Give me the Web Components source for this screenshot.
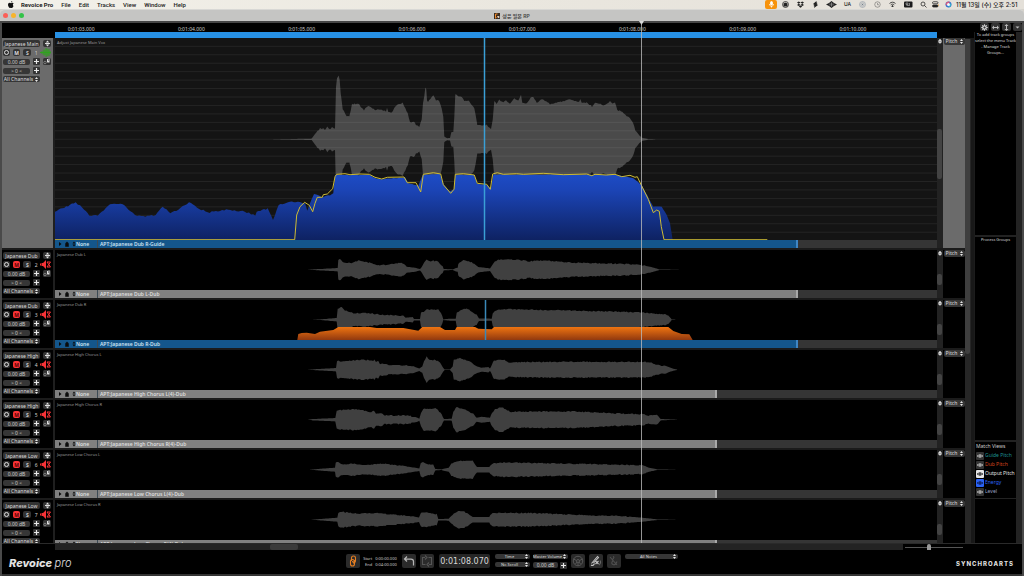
<!DOCTYPE html>
<html lang="en">
<head>
<meta charset="utf-8">
<title>Revoice Pro</title>
<style>
html, body { margin: 0; height: 100%; }
body { background: #d5d2cb; font-family: "Noto Sans", "Noto Sans CJK KR", sans-serif; font-size: 5px; line-height: 6px; color: #ccc; overflow: hidden; }
</style>
</head>
<body>
<rp-app></rp-app>
<script>
const BASE = `
  * { box-sizing: border-box; }
  button, select, input { font: inherit; color: inherit; margin: 0; padding: 0; border: 0; background: none; min-width: 0; appearance: none; border-radius: 0; outline-offset: 1px; }
  button { display: flex; align-items: center; justify-content: center; white-space: nowrap; }
  svg { display: block; }
`;
function define(name, render, after) {
  customElements.define(name, class extends HTMLElement {
    connectedCallback() {
      if (this.shadowRoot) return;
      const root = this.attachShadow({ mode: 'open' });
      const t = document.createElement('template');
      t.innerHTML = `<style>${BASE}</style>` + render(this);
      root.append(t.content.cloneNode(true));
      if (after) after(this, root);
    }
  });
}

/* ---------- drop-down ---------- */
define('rp-select', el => `
<style>
  :host { display: grid; height: 7px; background: #363636; border-radius: 2px; font-size: 5px; line-height: 7px; font-weight: 500; }
  select, svg { grid-area: 1 / 1; }
  select { width: 100%; height: 100%; text-align: center; text-align-last: center; padding-right: 6px; }
  svg { justify-self: end; align-self: center; margin-right: 2px; width: 3px; height: 5px; pointer-events: none; }
</style>
<select aria-label="${el.getAttribute('label')}"><option>${el.getAttribute('value')}</option></select>
<svg viewBox="0 0 6 10"><path d="M0 4L3 0L6 4zM0 6L3 10L6 6z" fill="#e6e6e6"/></svg>`);

/* ---------- system menu bar ---------- */
define('rp-menubar', () => `
<style>
  :host { display: flex; align-items: center; height: 9px; background: linear-gradient(90deg, #f3f1ea, #eae7df 50%, #e4e0d9); color: #1c1c1c; font: 500 6px/9px Inter, "Noto Sans CJK KR", sans-serif; padding: 0 7px 0 8px; }
  nav { display: flex; gap: 8px; margin-left: 7px; font-family: Roboto, sans-serif; }
  nav button:first-child { font-weight: 700; }
  .right { display: flex; align-items: center; margin-left: auto; height: 9px; }
  .right i { width: 15px; display: flex; justify-content: center; font-style: normal; font-size: 5px; }
  .right i svg { width: 7px; height: 7px; }
  .right .mic { width: 12px; height: 9px; background: #f7930c; border-radius: 2px; align-items: center; margin-right: 1px; }
  .w17 { width: 17px !important; } .w12 { width: 12px !important; }
  .w17 svg { width: 11px !important; }
  time { width: 61px; text-align: right; white-space: nowrap; }
</style>
<svg width="6" height="7" viewBox="0 0 24 28"><path fill="#111" d="M17 0c.3 3-2 6-5 6-.3-3 2-5.600 5-6zM22 20c-1.500 4-4 7.500-6 7.500s-2.500-1-4.500-1-3 1-4.500 1C4 27.500 0 20.500 0 15c0-5 3-8 6.500-8C9 7 10.500 8.500 12 8.500S15 7 18 7c1.500 0 3.500.8 4.700 2.500-4.500 2.500-3.700 8.500-.7 10.500z"/></svg>
<nav aria-label="Application menu"><button>Revoice Pro</button><button>File</button><button>Edit</button><button>Tracks</button><button>View</button><button>Window</button><button>Help</button></nav>
<div class="right">
  <i class="mic"><svg viewBox="0 0 14 14" stroke="#fff" fill="none" stroke-width="1.500"><rect x="5" y="1" width="4" height="7" rx="2" fill="#fff"/><path d="M3 6c0 6 8 6 8 0M7 10v3"/></svg></i>
  <i><svg viewBox="0 0 14 14"><circle cx="7" cy="7" r="6" fill="none" stroke="#222" stroke-width="1.500"/><path d="M3 5l4-2 4 2v6H3z" fill="#222"/></svg></i>
  <i><svg viewBox="0 0 14 14" fill="#222"><path d="M3.500 1L7 3.200 3.500 5.500 0 3.200zM10.500 1L14 3.200l-3.500 2.300L7 3.200zM3.500 5.500L7 7.800l-3.500 2.300L0 7.800zM10.500 5.500L14 7.800l-3.500 2.300L7 7.800zM7 9l3.500 2.200L7 13.500l-3.500-2.300z"/></svg></i>
  <i><svg viewBox="0 0 14 14" fill="#222"><path d="M9 0L2 6l3 2-2 2 2 1-1 3 8-6-3-2 2-2-2-1z"/></svg></i>
  <i class="w17"><svg viewBox="0 0 22 14"><path d="M0 7l4-2 2-1 5-4 5 4 2 1 4 2-4 2-2 1-5 4-5-4-2-1z" fill="#222"/><path d="M8 5v4M11 3v8M14 5v4" stroke="#ddd"/></svg></i>
  <i>UA</i>
  <i><svg viewBox="0 0 14 14" fill="none" stroke="#7d8a98"><circle cx="7" cy="7" r="6"/><circle cx="7" cy="7" r="3.500"/><circle cx="7" cy="7" r="1" fill="#456"/></svg></i>
  <i><svg viewBox="0 0 14 14" fill="none" stroke="#555"><circle cx="7" cy="7" r="5.500"/><path d="M7 4v3.500h3"/></svg></i>
  <i><svg viewBox="0 0 14 14" fill="none" stroke="#222" stroke-width="1.600"><path d="M1 5c4-3.500 8-3.500 12 0M3.500 7.800c2.500-2 4.500-2 7 0"/><path d="M5.500 10l1.500-1 1.500 1L7 12z" fill="#222"/></svg></i>
  <i class="w17"><svg viewBox="0 0 20 14"><rect x="1" y="1" width="17" height="12" rx="2" fill="#1c1c1c"/><path d="M5 4h4v3H5zM12 4v6M6 9h5" stroke="#ddd" fill="none"/></svg></i>
  <i class="w12"><svg viewBox="0 0 14 14" fill="none" stroke="#222" stroke-width="1.500"><circle cx="6" cy="6" r="4"/><path d="M9 9l4 4"/></svg></i>
  <i class="w12"><svg viewBox="0 0 14 14" fill="none" stroke="#222" stroke-width="1.500"><rect x="1" y="1.500" width="11" height="4" rx="2"/><rect x="1" y="8" width="11" height="4" rx="2" fill="#222"/><circle cx="13" cy="8" r="1" fill="#f7930c" stroke="none"/></svg></i>
  <i><svg viewBox="0 0 14 14"><circle cx="7" cy="7" r="6" fill="#3a6fd0"/><path d="M1.500 8a6 6 0 0 1 8-6.500L7 7z" fill="#d95a7c"/><path d="M12 5a6 6 0 0 1-5 8l0-6z" fill="#33b6c8"/><circle cx="7" cy="7" r="3" fill="#f3f6fb"/></svg></i>
  <time>11월 13일 (수) 오후 2:51</time>
</div>`);

/* ---------- window title bar ---------- */
define('rp-titlebar', () => `
<style>
  :host { display: grid; grid-template-columns: 1fr auto 1fr; align-items: center; height: 14px; padding: 0 3px 0; background: #c5c5c3; border-radius: 5px 5px 0 0; border-top: 1px solid #d8d8d5; border-bottom: 2px solid #454545; color: #444; font: 600 5px/8px Inter, "Noto Sans CJK KR", sans-serif; }
  .lights { display: flex; gap: 3px; }
  .lights button { width: 5px; height: 5px; border-radius: 50%; }
  h1 { display: flex; align-items: center; gap: 2px; font: inherit; margin: 0; }
</style>
<div class="lights"><button aria-label="Close" style="background:#fb5f57"></button><button aria-label="Minimize" style="background:#f8b42d"></button><button aria-label="Zoom" style="background:#33c348"></button></div>
<h1><svg width="6" height="6" viewBox="0 0 12 12"><rect width="12" height="12" fill="#3b2e22"/><path d="M3 11V2h4M5 9l3-3" stroke="#f08a2c" stroke-width="2" fill="none"/><circle cx="9" cy="8" r="2" fill="#ddd"/></svg>성운 일본 RP</h1>`);

/* ---------- ruler ---------- */
define('rp-ruler', () => `
<style>
  :host { display: block; margin: 0 37px 0 53px; }
  .codes { display: flex; height: 9px; overflow: hidden; font-size: 5px; line-height: 12px; }
  .codes span { flex: 0 0 12.500%; text-align: center; }
  .codes div { display: flex; flex: 0 0 100%; margin: 0 -29px; }
  .range { height: 6px; background: #2790e4; }
</style>
<div class="codes"><div>${[3,4,5,6,7,8,9,10].map(n => `<span>0:01:${String(n).padStart(2, '0')}.000</span>`).join('')}</div></div>
<div class="range"></div>`);

/* ---------- waveform drawings ---------- */
/* Envelope points are [x, amplitude] pairs in thirds of a pixel; x counts from ORIGIN. */
const ORIGIN = 235;
const WAVES = {
  1: '-50 0 0 1 65 2 75 16 90 33 95 30 100 34 105 28 112 38 120 30 126 37 132 31 135 33 138 158 141 183 146 193 149 178 152 138 158 90 170 70 178 68 186 106 208 105 212 98 222 88 235 101 255 88 270 90 288 84 291 94 295 82 305 81 320 103 338 110 346 93 353 78 360 50 371 54 378 43 388 38 395 58 399 108 403 128 406 156 409 150 411 118 414 113 425 126 430 133 438 118 447 116 455 93 460 68 463 8 472 3 480 4 484 22 490 23 493 68 496 136 504 128 515 128 523 116 535 116 545 103 553 93 557 73 562 43 575 41 590 43 603 31 608 58 613 115 620 106 628 118 640 110 648 118 660 106 673 123 685 116 693 132 697 110 710 108 722 125 730 126 740 110 757 121 780 106 800 109 838 120 868 112 871 122 875 110 890 110 906 98 916 111 940 102 955 108 960 116 967 108 975 110 982 88 997 83 1010 70 1020 63 1030 48 1036 28 1045 16 1055 5 1075 1 1100 0',
  2: '55 0 68 1 90 2 143 5 145 30 152 32 158 24 165 20 185 20 205 28 235 22 265 14 290 14 330 21 345 16 350 9 375 6 390 2 397 10 402 22 410 30 418 25 430 27 445 24 458 10 461 2 488 1 498 5 503 6 505 18 520 30 545 22 565 8 600 4 606 12 615 24 625 30 680 30 720 25 760 28 830 22 900 20 1040 16 1080 9 1108 1 1170 0',
  3: '70 0 90 1 140 5 143 32 155 39 165 28 190 19 235 20 270 15 340 12 347 6 368 8 372 2 390 2 393 20 410 30 445 30 453 20 457 10 460 1 480 3 497 3 500 20 510 28 530 34 560 15 567 4 605 3 608 18 618 28 635 32 820 28 1050 22 1100 18 1135 14 1145 1 1160 0',
  4: '55 0 68 1 138 5 141 26 160 25 210 30 245 28 250 26 253 31 258 24 265 27 270 18 300 14 365 12 375 8 388 4 397 10 402 24 410 40 418 30 440 28 450 20 460 5 464 1 480 1 488 10 491 30 510 34 540 25 560 10 575 6 595 8 600 4 606 15 612 28 640 30 655 22 780 24 1070 23 1085 20 1110 13 1130 10 1150 3 1165 0',
  5: '55 0 68 2 136 5 140 28 190 31 215 30 240 22 252 26 258 18 270 20 285 13 350 13 380 7 388 3 393 20 400 32 440 34 455 15 462 2 485 3 490 25 500 38 530 28 550 18 560 6 575 9 600 6 606 20 615 32 635 38 660 24 850 25 1000 18 1060 16 1075 12 1100 16 1112 2 1165 0',
  6: '60 0 70 1 135 6 137 20 143 24 150 20 160 15 185 18 225 14 275 18 337 12 380 5 388 4 392 18 399 22 415 16 430 14 436 2 455 1 461 3 476 6 484 18 505 27 548 27 561 8 598 8 608 18 630 22 729 20 897 17 1058 13 1077 6 1102 1 1160 0',
  7: '65 0 76 1 142 6 145 20 150 24 200 18 262 20 350 12 387 7 393 20 405 22 440 16 445 2 476 3 484 12 495 20 505 25 523 24 548 8 598 8 604 18 630 20 735 20 884 13 996 11 1058 6 1102 1 1160 0'
};
const ENERGY = '-705 455 -683 445 -643 427 -623 443 -602 467 -577 467 -565 455 -540 433 -502 433 -484 450 -465 465 -434 470 -403 465 -382 440 -359 460 -341 453 -303 427 -279 443 -247 457 -185 449 -136 455 -104 467 -100 455 -67 445 -51 480 -34 435 0 425 35 428 45 430 52 452 60 430 72 402 85 406 95 412 115 406 130 400 135 345 240 345 255 354 270 358 345 352 355 370 378 375 385 378 398 345 450 342 462 375 480 394 492 387 496 345 552 345 562 372 590 375 603 385 610 344 980 345 1010 350 1030 355 1055 375 1090 440 1115 440 1130 465 1140 490 1148 540';
const CONTOUR = '-705 539 14 539 20 465 30 440 44 427 58 436 68 455 75 430 82 412 97 412 100 404 112 402 128 386 135 350 140 343 165 341 180 344 210 342 238 343 255 352 275 357 292 352 342 351 352 368 378 368 392 396 400 343 430 338 452 342 460 374 482 400 492 388 496 343 520 341 553 345 562 370 590 373 601 388 608 342 622 338 640 343 680 341 700 343 760 340 820 344 890 342 905 347 915 343 950 345 975 343 995 350 1020 346 1035 352 1042 350 1055 378 1075 418 1090 458 1100 450 1108 454 1114 500 1122 539 1432 539';
const DUB_ENERGY = '22 120 25 102 35 99 50 98 75 102 90 95 130 90 145 81 240 81 260 84 340 84 385 92 397 81 450 81 465 90 495 90 500 81 555 81 565 86 605 88 612 81 1135 81 1150 93 1175 102 1198 103 1208 120';

const pairs = s => { const n = s.split(' ').map(Number), out = []; for (let i = 0; i < n.length; i += 2) out.push([n[i], n[i + 1]]); return out; };
const line = (s, oy) => pairs(s).map(([x, y]) => `${(ORIGIN + x / 3).toFixed(1)} ${(oy + y / 3).toFixed(1)}`).join('L');
/* Adds fine ripples along an energy outline. */
function rippled(s, oy) {
  const p = pairs(s), out = [];
  let seed = 5;
  for (let i = 1; i < p.length; i++) {
    const [x0, y0] = p[i - 1], [x1, y1] = p[i], steps = Math.max(1, Math.round((x1 - x0) / 6));
    for (let k = 0; k < steps; k++) {
      seed = (seed * 16807 + 11) % 2147483647;
      const j = k ? (seed / 2147483647 - .5) * (x0 < 130 ? 1.6 : .6) : 0;
      out.push(`${(ORIGIN + (x0 + (x1 - x0) * k / steps) / 3).toFixed(1)} ${(oy + (y0 + (y1 - y0) * k / steps) / 3 + j).toFixed(1)}`);
    }
  }
  const e = p[p.length - 1];
  out.push(`${(ORIGIN + e[0] / 3).toFixed(1)} ${(oy + e[1] / 3).toFixed(1)}`);
  return out.join('L');
}
function wavePath(key, cy) {
  const p = pairs(WAVES[key]), up = [], down = [];
  let seed = 17 * key;
  for (let i = 1; i < p.length; i++) {
    const [x0, a0] = p[i - 1], [x1, a1] = p[i], steps = Math.max(1, Math.round((x1 - x0) / 4));
    for (let k = 0; k < steps; k++) {
      seed = (seed * 16807 + 11) % 2147483647;
      const a = (a0 + (a1 - a0) * k / steps) / 3, j = a > 3 ? (seed / 2147483647 - .5) * 1.1 : 0;
      const x = (ORIGIN + (x0 + (x1 - x0) * k / steps) / 3).toFixed(1), h = Math.max(a + j, .1);
      up.push(`${x} ${(cy - h).toFixed(1)}`); down.push(`${x} ${(cy + h).toFixed(1)}`);
    }
  }
  return 'M' + up.join('L') + 'L' + down.reverse().join('L') + 'z';
}
define('rp-waveform', el => {
  const n = +el.getAttribute('track'), main = n === 1, h = main ? 202 : 40, cy = main ? 101.3 : 19.7;
  let s = `<path d="${wavePath(n, cy)}" fill="${main ? '#4a4a4a' : '#404040'}"/>`;
  if (main) {
    let g = '';
    for (let y = 8.3; y < h; y += 8.450) g += `M0 ${y.toFixed(2)}H882`;
    s += `<path d="${g}" stroke="#fff" stroke-opacity=".07"/>
    <linearGradient id="e" x1="0" y1="136" x2="0" y2="202" gradientUnits="userSpaceOnUse"><stop offset="0" stop-color="#1d4cc6"/><stop offset=".25" stop-color="#1b44b5"/><stop offset="1" stop-color="#0e2262"/></linearGradient>
    <path d="M0 202L${rippled(ENERGY, 22)}z" fill="url(#e)"/>
    <path d="M${line(CONTOUR, 22)}" fill="none" stroke="#cdbb35" stroke-width="1"/>
    <path d="M429.500 0V202" stroke="#3a9fd6" stroke-width="1.500"/>`;
  }
  if (n === 3) s += `
    <linearGradient id="o" x1="0" y1="27" x2="0" y2="40" gradientUnits="userSpaceOnUse"><stop stop-color="#ef7411"/><stop offset="1" stop-color="#91390f"/></linearGradient>
    <path d="M${line(DUB_ENERGY, 0)}z" fill="url(#o)"/><path d="M430.500 0V40" stroke="#3a88b8" stroke-width="1.500"/>`;
  return `<style>:host { display: block; } svg { width: 100%; height: 100%; }</style>
  <svg viewBox="0 0 882 ${h}" preserveAspectRatio="none" aria-hidden="true">${s}</svg>`;
});

/* ---------- track controls ---------- */
define('rp-track-header', el => {
  const n = el.getAttribute('number'), muted = n !== '1';
  const mag = `<svg width="7" height="7" viewBox="0 0 14 14"><rect width="14" height="14" rx="2" fill="#333"/><path d="M7 2v10M2 7h10" stroke="#e8e8e8" stroke-width="2.400"/></svg>`;
  return `
<style>
  :host { display: flex; flex-direction: column; gap: 2px; padding: 2px 2px 0 1px; background: ${muted ? '#000' : '#6b6b6b'}; overflow: hidden; }
  .row { display: flex; align-items: center; gap: 3px; height: 7px; }
  .name { width: 37px; height: 7px; background: #333; color: #ddd; border-radius: 2px; font-size: 5px; }
  .icon { width: 7px; height: 7px; background: #333; border-radius: 2px; }
  .mute { background: ${muted ? '#f93237' : '#333'}; color: ${muted ? '#5a0505' : '#ddd'}; }
  .icon.b { font-weight: 700; width: 8px; }
  .num { width: 4px; text-align: center; font-size: 5px; }
  .row .num + svg { margin-left: -1px; flex: none; }
  input { width: 27px; height: 6px; background: #363636; border-radius: 2px; text-align: center; font-size: 5px; }
  svg { flex: none; }
  rp-select { width: 37px; height: 6px; line-height: 6px; }
</style>
<div class="row"><button class="name">${el.getAttribute('name')}</button><button class="icon b" aria-label="Collapse track"><svg width="7" height="7" viewBox="0 0 14 14"><path d="M2 7h10" stroke="#ddd" stroke-width="2"/><path d="M3.500 5L7 1l3.500 4zM3.500 9L7 13l3.500-4z" fill="#ddd"/></svg></button></div>
<div class="row"><button class="icon" aria-label="Record"><svg width="7" height="7" viewBox="0 0 14 14"><circle cx="7" cy="7" r="4" fill="none" stroke="#ddd" stroke-width="2"/></svg></button><button class="icon b mute" aria-pressed="${muted}">M</button><button class="icon b">S</button><span class="num">${n}</span>
<svg width="11" height="9" viewBox="0 0 22 18">${muted
  ? '<path d="M0 7h2v4H0zM3 6h3v6H3zM6 6l6-6v18l-6-6z" fill="#f93237"/><path d="M14 4l7 10M21 4l-7 10M14 4h7M14 14h7" stroke="#f93237" stroke-width="2"/>'
  : '<path d="M0 9h22M3 7v4M6 5v8M8 3v12M10 4v10M12 0v18M14 1v16M16 3v12M18 2v14M20 6v6" stroke="#2ca51c" stroke-width="1.800"/>'}</svg></div>
<div class="row"><input aria-label="Track level" value="0.00 dB">${mag}<svg width="8" height="7" viewBox="0 0 16 14"><rect width="16" height="14" rx="3" fill="#333"/><circle cx="4" cy="9" r="2.500" fill="none" stroke="#bbb"/><path d="M8 8V2h2v4h1V1h2v8H9z" fill="#ddd"/></svg></div>
<div class="row"><input aria-label="Track pan" value="&gt; 0 &lt;">${mag}</div>
<rp-select label="Channels" value="All Channels"></rp-select>`;
});

/* ---------- track ---------- */
define('rp-track', el => {
  const n = el.getAttribute('number'), main = n === '1';
  const sel = el.hasAttribute('selected');
  return `
<style>
  :host { display: grid; grid-template-columns: 51px 2px minmax(0, 1fr) 6px 22px; flex: none; height: ${main ? 212 : 50}px; border-bottom: 2px solid #1b1b1b; background: #000; }
  .divider { background: #1f1f1f; }
  .lane { display: grid; grid-template-rows: 1fr 8px; min-width: 0; min-height: 0; background: ${main ? '#141414' : '#000'}; }
  rp-waveform, .title { grid-area: 1 / 1; min-height: 0; min-width: 0; }
  .title { margin: 2px; font-size: 4px; line-height: 5px; color: #9a9a9a; }
  .foot { background: #353535; }
  .clip { display: flex; align-items: center; height: 8px; width: ${el.getAttribute('end')}; background: ${sel ? '#14568b' : '#808080'}; color: ${sel ? '#cfe3f2' : '#dedede'}; border-right: 2px solid ${sel ? '#3f86c4' : '#a8a8a8'}; font-weight: 600; font-size: 5px; line-height: 8px; white-space: nowrap; }
  .clip svg { margin-left: 3px; flex: none; }
  .none { width: 22px; border-right: 1px solid #3c4a55; }
  .label { padding-left: 2px; }
  .scroll { background: #222; }
  .scroll svg { margin: 1px 1px 0; }
  .thumb { width: 5px; margin-top: ${main ? 85 : 18}px; height: ${main ? 50 : 11}px; border-radius: 2px; background: #434343; }
  .pitch { padding-left: 1px; background: ${main ? '#6b6b6b' : '#000'}; }
</style>
<rp-track-header name="${el.getAttribute('name')}" number="${n}"></rp-track-header>
<div class="divider"></div>
<div class="lane"><rp-waveform track="${n}"></rp-waveform><div class="title">${el.getAttribute('caption')}</div>
<div class="foot"><div class="clip">
<svg width="4" height="6" viewBox="0 0 8 12"><path d="M2 2v8l5-4z" fill="#0a0a0a"/></svg>
<svg width="4" height="6" viewBox="0 0 8 12"><path d="M1 5h6v6H1zM2.500 5V2.500h3V5" fill="#0a0a0a" stroke="#0a0a0a"/></svg>
<svg width="4" height="6" viewBox="0 0 8 12"><path d="M1 5l3-4 3 4zM1 7l3 4 3-4z" fill="#0a0a0a"/></svg>
<span class="none">None</span><span class="label">${el.getAttribute('clip')}</span></div></div></div>
<div class="scroll"><svg width="4" height="5" viewBox="0 0 8 10"><path d="M0 5h8M1 4l3-4 3 4zM1 6l3 3 3-3z" fill="#ddd" stroke="#ddd"/></svg><div class="thumb"></div></div>
<div class="pitch"><rp-select label="Track view" value="Pitch"></rp-select></div>`;
});

/* ---------- timeline ---------- */
const TRACKS = [
  ['Japanese Main', 'Adjust Japanese Main Vox', 'APT:Japanese Dub R-Guide', '84.200%', 1],
  ['Japanese Dub', 'Japanese Dub L', 'APT:Japanese Dub L-Dub', '84.200%', 0],
  ['Japanese Dub', 'Japanese Dub R', 'APT:Japanese Dub R-Dub', '84.200%', 1],
  ['Japanese High', 'Japanese High Chorus L', 'APT:Japanese High Chorus L(4)-Dub', '75.100%', 0],
  ['Japanese High', 'Japanese High Chorus R', 'APT:Japanese High Chorus R(4)-Dub', '75.100%', 0],
  ['Japanese Low', 'Japanese Low Chorus L', 'APT:Japanese Low Chorus L(4)-Dub', '75.100%', 0],
  ['Japanese Low', 'Japanese Low Chorus R', 'APT:Japanese Low Chorus R(4)-Dub', '75.100%', 0]
];
define('rp-timeline', () => `
<style>
  :host { display: flex; flex-direction: column; min-width: 0; min-height: 0; position: relative; background: #000; }
  .body { flex: 1; min-height: 0; display: grid; grid-template-columns: minmax(0, 1fr) 9px; }
  .tracks { display: flex; flex-direction: column; overflow: hidden; min-height: 0; }
  .vscroll { background: #262626; border-right: 3px solid #181818; border-top: 1px solid #181818; }
  .vscroll div { height: 62.500%; width: 5px; background: #3e3e3e; border-radius: 0 0 3px 3px; }
  .playhead { position: absolute; top: 0; bottom: 0; left: calc(53px + (100% - 90px) * .6645); width: 1px; background: #b9b9b9; opacity: .8; }
  .playhead svg { margin: -2px 0 0 -2px; }
</style>
<rp-ruler></rp-ruler>
<div class="body"><div class="tracks">
${TRACKS.map((t, i) => `<rp-track number="${i + 1}" name="${t[0]}" caption="${t[1]}" clip="${t[2]}" end="${t[3]}"${t[4] ? ' selected' : ''}></rp-track>`).join('')}
</div><div class="vscroll"><div></div></div></div>
<div class="playhead"><svg width="5" height="4" viewBox="0 0 10 8"><path d="M0 0h10L5 8z" fill="#fff"/></svg></div>`);

/* ---------- side panel ---------- */
const EYE = (c, bg) => `<svg width="8" height="8" viewBox="0 0 16 16"><rect width="16" height="16" rx="2" fill="${bg}"/><path d="M2 8q6-6 12 0q-6 6-12 0z" fill="none" stroke="${c}" stroke-width="1.600"/><circle cx="8" cy="8" r="2" fill="${c}"/></svg>`;
define('rp-sidebar', () => `
<style>
  :host { display: flex; flex-direction: column; min-height: 0; background: #000; }
  .tools { display: flex; gap: 2px; height: 9px; justify-content: flex-end; }
  .tools button { width: 9px; height: 8px; background: #333; border-radius: 2px; }
  .cols { flex: 1; min-height: 0; display: grid; grid-template-columns: minmax(0, 1fr) 6px; }
  .panels { display: flex; flex-direction: column; min-height: 0; border-left: 1px solid #1c1c1c; }
  section { border-bottom: 2px solid #222; text-align: center; }
  section p, h2 { margin: 0; font: inherit; }
  .grow { flex: 1 1 0; min-height: 0; font-size: 4px; white-space: nowrap; color: #ddd; }
  .views { height: 57px; text-align: left; border-bottom: 1px solid #222; padding: 1px; line-height: 7px; display: flex; flex-direction: column; gap: 2px; }
  label { display: flex; align-items: center; gap: 1px; height: 7px; white-space: nowrap; }
  label input { position: absolute; width: 8px; height: 7px; opacity: 0; }
  .rest { height: 44px; }
  .bar { background: #232323; }
</style>
<div class="tools">
<button aria-label="Settings"><svg width="7" height="7" viewBox="0 0 14 14"><circle cx="7" cy="7" r="3.500" fill="none" stroke="#ddd" stroke-width="2.400"/><path d="M7 0v14M0 7h14M2 2l10 10M12 2L2 12" stroke="#ddd" stroke-width="1.400"/><circle cx="7" cy="7" r="2" fill="#333"/></svg></button>
<button aria-label="Fit width"><svg width="7" height="5" viewBox="0 0 14 10"><path d="M2 5h10" stroke="#bbb" stroke-width="2"/><path d="M4 1L0 5l4 4zM10 1l4 4-4 4z" fill="#bbb"/></svg></button>
<button aria-label="Fit height"><svg width="5" height="7" viewBox="0 0 10 14"><path d="M5 2v10" stroke="#bbb" stroke-width="2"/><path d="M1 4l4-4 4 4zM1 10l4 4 4-4z" fill="#bbb"/></svg></button>
<button aria-label="More"><svg width="5" height="3" viewBox="0 0 10 6"><path d="M1 1h8L5 5z" fill="#bbb"/></svg></button></div>
<div class="cols"><div class="panels">
<section class="grow"><p>To add track groups<br>select the menu Tracks<br>- Manage Track<br>Groups...</p></section>
<section class="grow"><h2>Process Groups</h2></section>
<section class="views"><h2>Match Views</h2>
${[['Guide Pitch', '#1d8f92', '#bbb', '#333'], ['Dub Pitch', '#d3441c', '#bbb', '#333'], ['Output Pitch', '#e0e0e0', '#222', '#e6e6e6'], ['Energy', '#2a62f5', '#0b1a4a', '#2a62f5'], ['Level', '#9aa0c0', '#bbb', '#333']]
  .map(([t, c, e, b], i) => `<label style="color:${c}"><input type="checkbox"${i === 2 || i === 3 ? ' checked' : ''}>${EYE(e, b)}${t}</label>`).join('')}
</section><div class="rest"></div></div><div class="bar"></div></div>`);

/* ---------- horizontal scroll and zoom ---------- */
define('rp-zoombar', () => `
<style>
  :host { display: grid; grid-template-columns: 53px minmax(0, 1fr) 60px 59px; height: 7px; background: #000; border-top: 1px solid #2a2a2a; }
  .h { grid-column: 2; background: #232323; }
  .h div { width: 28px; height: 6px; margin-left: 25.300%; background: #3a3a3a; border-radius: 2px; }
  input { width: 58px; height: 6px; margin-left: 2px; background: linear-gradient(#555, #555) center / 100% 1px no-repeat; }
  input::-webkit-slider-thumb { appearance: none; width: 4px; height: 6px; border-radius: 2px 2px 0 0; background: #999; }
</style>
<div class="h"><div></div></div><input type="range" aria-label="Zoom" min="0" max="100" value="40">`);

/* ---------- transport ---------- */
define('rp-transport', () => `
<style>
  :host { display: grid; grid-template-columns: minmax(0, 1fr) auto minmax(0, 1fr); height: 26px; background: #000; padding: 4px 7px 0; border-bottom: 2px solid #333; }
  .logo { font: italic 800 11px/19px Inter, sans-serif; color: #e2e2e2; }
  .logo span { font-weight: 300; }
  .mid { display: flex; align-items: flex-start; }
  .mid > button { width: 14px; height: 14px; background: #2b2b2b; border-radius: 2px; }
  dl { margin: 2px 5px 0 3px; display: grid; grid-template-columns: auto auto; gap: 0 3px; font-size: 4px; line-height: 6px; width: 34px; white-space: nowrap; }
  dd { margin: 0; }
  dt { text-align: right; }
  output { width: 51px; height: 14px; margin: 0 5px; background: #262626; border-radius: 2px; text-align: center; font: 8px/15px "DejaVu Sans", sans-serif; color: #d8d8d8; }
  .pair { display: flex; flex-direction: column; gap: 3px; width: 35px; margin-right: 3px; }
  .pair rp-select { height: 5px; line-height: 5px; font-size: 4px; width: 100%; }
  .pair div { display: flex; gap: 2px; align-items: center; height: 6px; }
  .pair input { width: 25px; height: 6px; background: #363636; border-radius: 2px; text-align: center; }
  .all { width: 53px; height: 5px; line-height: 5px; font-size: 4px; margin-left: 4px; }
  .brand { justify-self: end; align-self: center; margin-right: 1px; font: 800 6px/8px Inter, sans-serif; color: #ddd; display: flex; letter-spacing: 1px; }
</style>
<div class="logo">Revoice <span>pro</span></div>
<div class="mid">
<button aria-label="Link"><svg width="10" height="12" viewBox="0 0 20 24" fill="none" stroke="#e57e22" stroke-width="2.200"><path d="M7 12V6q0-4 4-4t4 4v6q0 3-3 3t-3-3"/><path d="M13 10v8q0 4-4 4t-4-4v-5q0-4 4-4t3 4v5"/></svg></button>
<dl><dt>Start</dt><dd>0:00:00.000</dd><dt>End</dt><dd>0:04:00.000</dd></dl>
<button aria-label="Undo"><svg width="12" height="12" viewBox="0 0 24 24" fill="none" stroke="#b5b5b5" stroke-width="2.500"><path d="M8 3L3 8l5 5M3 8h13q5 0 5 5v8"/></svg></button>
<button aria-label="Loop" style="margin-left:4px"><svg width="12" height="12" viewBox="0 0 24 24" fill="none" stroke="#555" stroke-width="2.200"><path d="M8 5H3v14h6M15 5h6v14h-5M8 1l4 4-4 4M16 15l-4 4 4 4"/></svg></button>
<output>0:01:08.070</output>
<div class="pair"><rp-select label="Time format" value="Time"></rp-select><rp-select label="Scroll mode" value="No Scroll"></rp-select></div>
<div class="pair"><rp-select label="Volume" value="Master Volume"></rp-select><div><input aria-label="Master level" value="0.00 dB"><svg width="7" height="7" viewBox="0 0 14 14"><rect width="14" height="14" rx="2" fill="#333"/><path d="M7 2v10M2 7h10" stroke="#e8e8e8" stroke-width="2.400"/></svg></div></div>
<button aria-label="Process"><svg width="12" height="12" viewBox="0 0 24 24" fill="none" stroke="#575757" stroke-width="2"><circle cx="12" cy="12" r="9.500"/><circle cx="12" cy="12" r="3"/><path d="M3 8l6 3M21 8l-6 3M12 15v6M7 18l3-4M17 18l-3-4"/></svg></button>
<button aria-label="Edit notes" style="margin-left:4px"><svg width="12" height="12" viewBox="0 0 24 24" fill="none" stroke="#c4c4c4" stroke-width="2.200"><path d="M3 17L15 3l2 2L7 16M2 20q4 3 7-3M11 12l6 6M17 12l-6 6"/><path d="M18 20q5-4 2-9" stroke="#666"/></svg></button>
<button aria-label="Cut notes" style="margin-left:4px"><svg width="12" height="12" viewBox="0 0 24 24" fill="none" stroke="#505050" stroke-width="2.200"><path d="M4 4l14 16M10 11q-5 6 0 8t8-6M9 9q5-5 1-6"/></svg></button>
<rp-select class="all" label="Notes" value="All Notes"></rp-select>
</div>
<div class="brand">SYNCHROARTS</div>`);

/* ---------- app ---------- */
define('rp-app', () => `
<style>
  :host { display: flex; flex-direction: column; height: 100vh; }
  main { flex: 1; min-height: 0; display: flex; flex-direction: column; padding: 0 2px; background: #4a4a4a; }
  .work { flex: 1; min-height: 0; display: grid; grid-template-columns: minmax(0, 1fr) 48px; grid-template-rows: minmax(0, 1fr); }
</style>
<rp-menubar></rp-menubar><rp-titlebar></rp-titlebar>
<main><div class="work"><rp-timeline></rp-timeline><rp-sidebar></rp-sidebar></div><rp-zoombar></rp-zoombar><rp-transport></rp-transport></main>`);
</script>
</body>
</html>
